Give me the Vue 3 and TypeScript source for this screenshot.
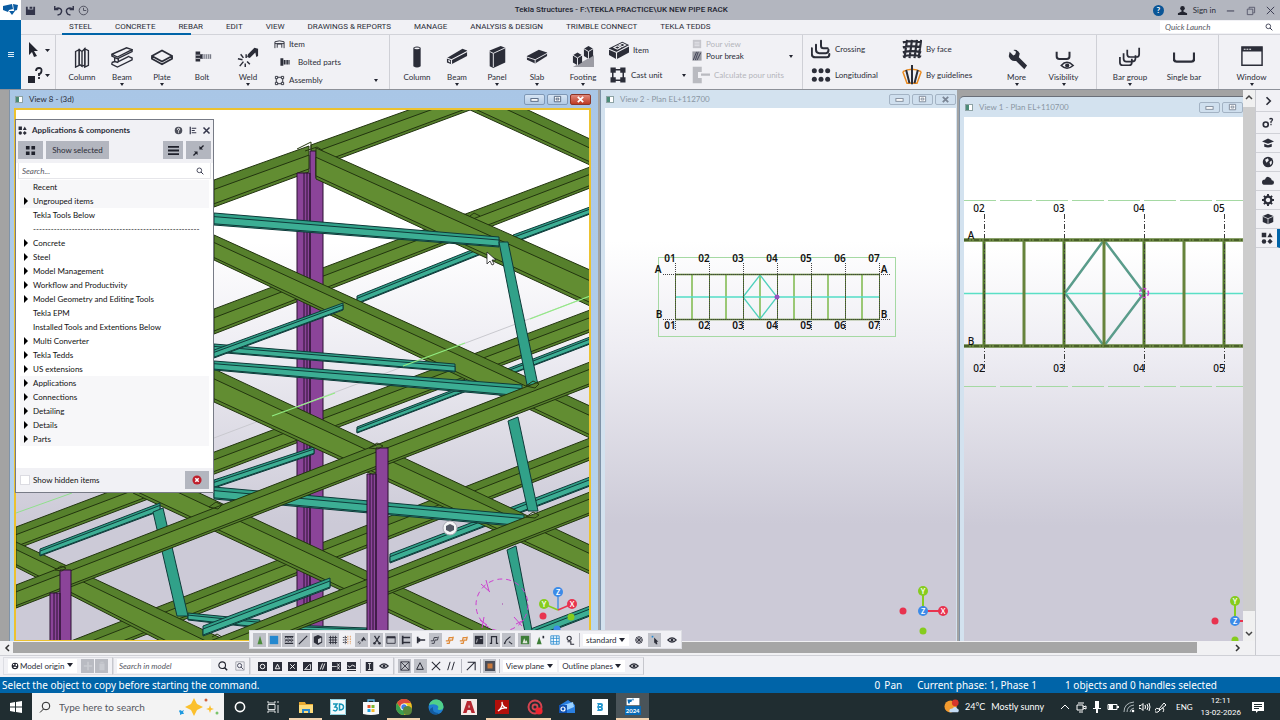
<script setup lang="ts">
import { ref } from 'vue'

interface Tool { name: string; label: string; icon: string; arrow?: boolean }
interface Member { kind: 'green' | 'teal'; a: [number, number, number]; b: [number, number, number] }
interface TreeRow { label: string; open: boolean; shade?: boolean }

const tabs = ['STEEL', 'CONCRETE', 'REBAR', 'EDIT', 'VIEW', 'DRAWINGS & REPORTS', 'MANAGE', 'ANALYSIS & DESIGN', 'TRIMBLE CONNECT', 'TEKLA TEDDS']

/* Ribbon glyphs, drawn on a 24 unit grid */
const glyphs: Record<string, string> = {
  steelColumn: '<g fill="#f1f1f5" stroke="currentColor" stroke-width="1.5"><path d="M5 6l4-2v17l-4 2zM15 3l4 2v16l-4 2z"/><path d="M9 4l3 2v16l-3-2zM12 6l3-3v18l-3 1z"/></g>',
  steelBeam: '<g fill="none" stroke="currentColor" stroke-width="1.5"><path d="M1 9L17 2l6 2L7 12zM1 9v2l6 3 16-8V4M4 13v4M8 14v3l12-6M1 18v2l6 3 16-8v-2l-3-1M1 18l3-1 4 1"/></g>',
  steelPlate: '<g fill="none" stroke="currentColor" stroke-width="1.900"><path d="M1 11l11-6 11 6-11 6zM1 11v3l11 6 11-6v-3"/></g>',
  bolt: '<path fill="currentColor" d="M5 6h5v11H5zM10 9h3v5h-3z"/><path fill="#777a86" d="M12 9h10v5H12z"/><path stroke="#f1f1f5" stroke-width=".8" d="M14 9v5M16 9v5M18 9v5M20 9v5M5 10h5M5 13.500h5"/>',
  weld: '<path fill="currentColor" d="M11 12l1-3 7-7 4 1v8l-2 1-1-5-6 6z"/><path d="M1 14l5 1M3 22l4-5M9 23v-4M14 20l-3-3M4 9l3 4M10 9v4" stroke="currentColor" stroke-width="1.600"/>',
  concColumn: '<path fill="currentColor" d="M8 2q4-3 8 0v20q-4 3-8 0z"/><ellipse cx="12" cy="2.500" rx="3" ry="1" fill="#f1f1f5"/>',
  concBeam: '<path fill="currentColor" d="M1 13L18 3l5 2v6L6 20l-5-2z"/><path fill="none" stroke="#f1f1f5" stroke-width="1.200" d="M1 13l5 2L23 6M6 15v5"/><path fill="#f1f1f5" d="M2.500 15l2 1v2l-2-1z"/>',
  panel: '<path fill="currentColor" d="M4 5l12-5 5 2v16L8 24l-4-2z"/><path fill="none" stroke="#f1f1f5" stroke-width="1" d="M4 6l4 2 13-6M8 8v15"/>',
  slab: '<path fill="currentColor" d="M1 11L14 4l9 3v4L10 19 1 15z"/><path fill="none" stroke="#f1f1f5" stroke-width="1" d="M1 12l9 3 13-7M10 15v4"/>',
  footing: '<path fill="#9c9ca4" d="M1 23h23V10z"/><path fill="currentColor" d="M1 10l5-3 5 3v8l-5 3-5-3zM13 3l5-3 5 3v8l-5 3-5-3z"/><path fill="none" stroke="#f1f1f5" stroke-width="1" d="M1 10l5 3 5-3M6 13v8M13 3l5 3 5-3M18 6v8"/>',
  itemTable: '<path fill="none" stroke="currentColor" stroke-width="2" d="M2 20V6q10-4 20 0v14M7 19V11h10v8M2 10h20"/>',
  boltedParts: '<path fill="currentColor" d="M1 3h7v18H1zM9 7h3v11H9zM13 7h3v11h-3zM17 7h3v11h-3zM21 7h2v11h-2z"/>',
  assembly: '<g fill="none" stroke="currentColor" stroke-width="2"><path d="M3 3h5v5H3zM16 3h5v5h-5zM3 16h5v5H3zM16 16h5v5h-5zM8 5h8M8 19h8M5 8v8M19 8v8"/></g>',
  castItem: '<path fill="currentColor" d="M0 10L16 2l8 4v9L9 23 0 18z"/><path fill="none" stroke="#f1f1f5" stroke-width="1.300" d="M0 11l9 4 15-8M9 15v8M6 9l4-2 4 2-4 2zM12 6l4-2 4 2-4 2z"/>',
  castUnit: '<g fill="currentColor"><path d="M2 2h7v7H2zM15 2h7v7h-7zM2 15h7v7H2zM15 15h7v7h-7z"/></g><path fill="none" stroke="currentColor" stroke-width="2" d="M5 5h14v14H5z"/>',
  pourView: '<path fill="#c6c6cc" d="M2 2h20v20H2z"/><path stroke="#f1f1f5" stroke-width="1.500" d="M6 8h12M6 12h12M6 16h12"/>',
  pourBreak: '<path fill="#9a9ba3" d="M1 1h22v22H1z"/><path fill="none" stroke="#33354a" stroke-width="2" d="M3 22L11 2M12 22l9-18M8 22l7-20"/>',
  pourUnits: '<path fill="#b9bac0" d="M1 1h12v7H8v8h5v7H1zM12 10h12v3H12z"/>',
  crossing: '<g fill="none" stroke="currentColor" stroke-width="2.400" stroke-linecap="round"><path d="M1 11v7q0 4 4 4h14q3 0 3-4M6 7v6q0 4 4 4h8q3 0 3-4M12 2v6q0 3 3 3h5"/></g>',
  longitudinal: '<g fill="currentColor"><circle cx="4" cy="7" r="3"/><circle cx="12" cy="7" r="3"/><circle cx="20" cy="7" r="3"/><circle cx="4" cy="17" r="3"/><circle cx="12" cy="17" r="3"/><circle cx="20" cy="17" r="3"/></g>',
  byFace: '<path fill="none" stroke="currentColor" stroke-width="2.600" d="M6 1L3 23M12 1L9 23M18 1l-3 22M23 1l-3 22M1 4q11-3 22 0M1 10q11-3 22 0M1 16q11-3 22 0M1 21q11-3 22 0"/>',
  guidelines: '<path fill="none" stroke="#eb8a1e" stroke-width="1.800" d="M1 8q11-6 22 0M1 8l5 14h12l5-14"/><path stroke="currentColor" stroke-width="2.400" d="M12 0v23M5 6l4 16M19 6l-4 16"/>',
  wrench: '<path fill="currentColor" d="M4 3l4 4 2-1 1-3-3-2q5-1 7 4l-1 4 9 9-3 4-9-9q-6 1-8-5z"/>',
  visibility: '<path fill="none" stroke="currentColor" stroke-width="2.200" d="M4 3v5q0 3 3 3h8q3 0 3-3V3"/><path fill="none" stroke="currentColor" stroke-width="1.700" d="M9 18q6-7 13 0-7 6-13 0z"/><circle cx="15.500" cy="18" r="2.300" fill="currentColor"/>',
  barGroup: '<g fill="none" stroke="currentColor" stroke-width="1.900"><path d="M1 12v6q0 3 3 3h7q3 0 3-3v-4M5 8v6q0 3 3 3h6q4 0 4-4v-3M9 4v5q0 3 3 3h7q3 0 3-3V2"/></g>',
  singleBar: '<path fill="none" stroke="currentColor" stroke-width="2.600" d="M1 7v7q0 3 3 3h16q3 0 3-3V7"/>',
  windowBox: '<path fill="none" stroke="currentColor" stroke-width="1.600" d="M1 1h22v20H1z"/><path fill="currentColor" d="M1 1h22v5H1z"/><path stroke="#f1f1f5" stroke-width="1.200" d="M3 3.500h2M6 3.500h2M9 3.500h2"/>',
}

const steelTools: Tool[] = [
  { name: 'sc', label: 'Column', icon: 'steelColumn' },
  { name: 'sb', label: 'Beam', icon: 'steelBeam', arrow: true },
  { name: 'sp', label: 'Plate', icon: 'steelPlate', arrow: true },
  { name: 'bo', label: 'Bolt', icon: 'bolt' },
  { name: 'we', label: 'Weld', icon: 'weld', arrow: true },
]
const concreteTools: Tool[] = [
  { name: 'cc', label: 'Column', icon: 'concColumn' },
  { name: 'cb', label: 'Beam', icon: 'concBeam', arrow: true },
  { name: 'cp', label: 'Panel', icon: 'panel', arrow: true },
  { name: 'cs', label: 'Slab', icon: 'slab', arrow: true },
  { name: 'cf', label: 'Footing', icon: 'footing', arrow: true },
]

const tree: TreeRow[] = [
  { label: 'Recent', open: false, shade: true },
  { label: 'Ungrouped items', open: true, shade: true },
  { label: 'Tekla Tools Below', open: false },
  { label: '-'.repeat(56), open: false },
  { label: 'Concrete', open: true },
  { label: 'Steel', open: true },
  { label: 'Model Management', open: true },
  { label: 'Workflow and Productivity', open: true },
  { label: 'Model Geometry and Editing Tools', open: true },
  { label: 'Tekla EPM', open: false },
  { label: 'Installed Tools and Extentions Below', open: false },
  { label: 'Multi Converter', open: true },
  { label: 'Tekla Tedds', open: true },
  { label: 'US extensions', open: true },
  { label: 'Applications', open: true, shade: true },
  { label: 'Connections', open: true, shade: true },
  { label: 'Detailing', open: true, shade: true },
  { label: 'Details', open: true, shade: true },
  { label: 'Parts', open: true, shade: true },
]

/* Model members: [x, top edge, bottom edge] at each end */
const g = (...v: number[]): Member => ({ kind: 'green', a: [v[0], v[1], v[2]], b: [v[3], v[4], v[5]] })
const t = (...v: number[]): Member => ({ kind: 'teal', a: [v[0], v[1], v[2]], b: [v[3], v[4], v[5]] })

const rear: Member[] = [
  g(214, 309, 334, 590, 167, 188),
  g(16, 527, 549, 590, 310, 332),
  g(71, 641, 664, 590, 438, 460),
  g(468, 82, 109, 590, 139, 165),
  g(214, 180, 207, 309, 146, 172),
  g(311, 145, 169, 470, 88, 110),
]
const rearBraces: Member[] = [
  t(513, 235, 243, 590, 207, 214),
  t(357, 296, 304, 499, 239, 247),
  t(357, 427, 433, 590, 337, 344),
  t(214, 480, 488, 314, 447, 454),
  t(390, 554, 563, 590, 477, 486),
  t(188, 613, 620, 260, 620, 628),
  t(262, 624, 628, 367, 628, 633),
]
const middle: Member[] = [
  g(464, 214, 240, 590, 276, 300),
  g(316, 148, 179, 590, 270, 306),
  g(214, 235, 260, 590, 406, 438),
  g(214, 369, 402, 590, 545, 574),
  g(133, 462, 493, 516, 641, 672),
  g(16, 542, 567, 225, 640, 674),
  t(214, 213, 225, 499, 237, 247),
  t(214, 344, 352, 455, 364, 372),
  t(214, 361, 370, 522, 385, 397),
  t(214, 487, 499, 524, 515, 527),
  t(214, 350, 358, 343, 303, 310),
  t(40, 549, 556, 160, 503, 511),
  t(203, 626, 636, 330, 578, 588),
  t(528, 630, 640, 590, 606, 616),
]
const front: Member[] = [
  g(16, 585, 608, 590, 362, 386),
  g(200, 645, 668, 590, 492, 515),
]
const struts = ['153,512 163,508 188,616 177,616', '499,242 508,242 538,385 527,385', '508,421 518,417 538,511 528,511', '507,550 516,546 534,641 527,641']

const outline = (m: Member) => `${m.a[0]},${m.a[1]} ${m.b[0]},${m.b[1]} ${m.b[0]},${m.b[2]} ${m.a[0]},${m.a[2]}`
const strip = (m: Member, from: number, to: number) => {
  const at = (e: [number, number, number], f: number) => e[1] + (e[2] - e[1]) * f
  return `${m.a[0]},${at(m.a, from)} ${m.b[0]},${at(m.b, from)} ${m.b[0]},${at(m.b, to)} ${m.a[0]},${at(m.a, to)}`
}

const smallPlan = {
  axes: [675, 709, 743, 777, 811, 845, 879].map((x, i) => ({ x, label: `0${i + 1}` })),
  mids: [692, 726, 760, 794, 828, 862],
}
const largePlan = {
  axes: [984, 1064, 1144, 1224].map((x, i) => ({ x, label: `0${i + 2}` })),
  mids: [1024, 1104, 1184],
}

/* Small toolbar glyphs on a 12 unit grid */
const mini: Record<string, string> = {
  cone: '<path fill="#4b8b3b" d="M6 1l3 10H3z"/>',
  part: '<path fill="#2488cf" d="M1 1h10v10H1z"/>',
  grate: '<path stroke="currentColor" stroke-width="1.400" d="M1 2h10M1 6h10M1 10h10"/><path stroke="currentColor" d="M1 4l2-2 2 2 2-2 2 2 2-2M1 8l2-2 2 2 2-2 2 2 2-2" fill="none"/>',
  line: '<path stroke="currentColor" stroke-width="1.300" d="M1 11L11 1"/>',
  cube: '<path fill="currentColor" d="M6 0l5 2v7l-5 3-5-3V2z"/><path fill="#d5d7dd" d="M6 5l4-2v5l-4 2z"/>',
  grid: '<path stroke="currentColor" d="M1 3h10M1 6h10M1 9h10M3 1v10M6 1v10M9 1v10"/>',
  gridDots: '<path stroke="#e0904a" stroke-dasharray="2 1" d="M7 1v10M10 1v10"/><path stroke="currentColor" stroke-dasharray="2 1" d="M1 3h6M1 6h6M1 9h6M4 1v10"/>',
  weldSmall: '<path fill="currentColor" d="M5 6l3-4 3 5-3-1-2 2z"/><path stroke="currentColor" d="M1 9l2-1M3 11l1-2"/>',
  cut: '<path fill="none" stroke="currentColor" stroke-width="1.500" d="M3 1l5 8M9 1L4 9"/><circle cx="3" cy="10" r="1.500" fill="currentColor"/><circle cx="9" cy="10" r="1.500" fill="currentColor"/>',
  frame: '<path fill="none" stroke="currentColor" d="M1 2h10v8H1z"/><path stroke="currentColor" stroke-width="2" d="M1 3h10"/>',
  clamp: '<path fill="none" stroke="currentColor" stroke-width="2" d="M2 1v10M2 3h9M2 9h9"/>',
  boltSmall: '<path fill="currentColor" d="M1 2h2v8H1zM3 4h2v4H3zM5 5h6v2H5z"/>',
  rebar: '<path fill="none" stroke="currentColor" d="M2 10h3l1-4h3l1-4M1 7h3l1-4h4"/>',
  rebarOrange: '<path fill="none" stroke="#df8b3a" stroke-width="1.500" d="M2 10h3l1-4h3l1-4M1 7h3l1-4h4"/>',
  solid: '<path fill="currentColor" d="M1 1h10v10H1z"/><path stroke="#d5d7dd" d="M3 9l1-4M7 4h3"/>',
  gate: '<path fill="none" stroke="currentColor" stroke-width="1.500" d="M1 10h2V2h6v8h2"/>',
  leader: '<path fill="none" stroke="currentColor" stroke-width="1.300" d="M2 10l2-4 5-4M7 8l4 3"/><circle cx="2" cy="10" r="1" fill="currentColor"/>',
  terrain: '<path fill="#3e7d38" d="M1 1h10v10H1z"/><path fill="#dfe8dc" d="M3 10l2-6 2 4 1-2 1 4z"/>',
  coneStar: '<path fill="#3e7d38" d="M5 2l3 9H2z"/><path fill="currentColor" d="M9 1h2v3H9z"/>',
  blueGrid: '<path fill="#fff" stroke="#2488cf" d="M1 1h10v10H1zM4 1v10M8 1v10M1 4h10M1 8h10"/>',
  probe: '<circle cx="5" cy="4" r="2.500" fill="none" stroke="currentColor" stroke-width="1.300"/><path fill="none" stroke="currentColor" stroke-width="1.300" d="M3 8h4v3h4"/>',
  sphere: '<circle cx="6" cy="6" r="4" fill="none" stroke="currentColor"/><path stroke="currentColor" d="M3 3l6 6M9 3L3 9M2 6h8M6 2v8"/>',
  pick: '<path fill="#2488cf" d="M2 1h2v2H2z"/><path fill="currentColor" d="M5 3l5 5H8l1 3-2 0-1-2-1 1z"/>',
  eye: '<path fill="none" stroke="currentColor" stroke-width="1.300" d="M1 6q5-5 10 0-5 5-10 0z"/><circle cx="6" cy="6" r="1.800" fill="currentColor"/>',
  k1: '<path fill="currentColor" d="M0 0h12v12H0z"/><circle cx="6" cy="6" r="3" fill="none" stroke="#fff" stroke-width="1.300"/>',
  k2: '<path fill="currentColor" d="M0 0h12v12H0z"/><path fill="none" stroke="#fff" stroke-width="1.200" d="M6 3l3 6H3z"/>',
  k3: '<path fill="currentColor" d="M0 0h12v12H0z"/><path stroke="#fff" stroke-width="1.300" d="M3 3l6 6M9 3L3 9"/>',
  k4: '<path fill="currentColor" d="M0 0h12v12H0z"/><path fill="none" stroke="#fff" d="M2 10h8V3M5 9V7M2 10l7-7"/>',
  k5: '<path fill="currentColor" d="M0 0h12v12H0z"/><path stroke="#fff" stroke-width="1.200" d="M3 10l3-8M6 10l3-8"/>',
  k6: '<path fill="currentColor" d="M0 0h12v12H0z"/><path fill="none" stroke="#fff" d="M0 6h6M7 2l3 4-3 4M10 2L7 6l3 4"/>',
  k7: '<path fill="currentColor" d="M0 0h12v12H0z"/><path fill="none" stroke="#fff" stroke-width="1.200" d="M1 5l3 2 3-3 4 2M0 10h12"/>',
  k8: '<path fill="currentColor" d="M1 0h10v12H1z"/><path fill="none" stroke="#fff" d="M4 2h4M4 10h4M6 2v8"/>',
  boxX: '<path fill="none" stroke="currentColor" d="M1 1h10v10H1zM1 1l10 10M11 1L1 11"/>',
  tri: '<path fill="none" stroke="currentColor" stroke-width="1.200" d="M6 2l4 8H2z"/>',
  cross: '<path stroke="currentColor" stroke-width="1.300" d="M1 1l10 10M11 1L1 11"/>',
  slashes: '<path stroke="currentColor" stroke-width="1.200" d="M2 11l3-10M7 11l3-10"/>',
  arrowUp: '<path fill="none" stroke="currentColor" stroke-width="1.300" d="M1 11L10 2M2 1.500h9V11"/>',
  target: '<path fill="#4a4d59" d="M0 0h12v12H0z"/><path fill="#c8783c" d="M3 3h6v6H3z"/>',
}
const selectors = ['cone', 'part', 'grate', 'line', 'cube', 'grid', 'gridDots', 'weldSmall', 'cut', 'frame', 'clamp', 'boltSmall', 'rebar', 'rebarOrange', 'rebarOrange', 'solid', 'gate', 'leader']
const plainSelectors = [6, 11, 13, 14]
const selectors2 = ['terrain', 'coneStar', 'blueGrid', 'probe']
const snaps = ['k1', 'k2', 'k3', 'k4', 'k5', 'k6', 'k7']

/* Side pane glyphs on a 16 unit grid */
const side: { name: string; art: string }[] = [
  { name: 'Expand', art: '<path fill="none" stroke="currentColor" stroke-width="2.200" d="M6 3l5 5-5 5"/>' },
  { name: 'Help', art: '<circle cx="5" cy="10" r="3.300" fill="none" stroke="currentColor" stroke-width="2.200"/><path fill="none" stroke="currentColor" stroke-width="1.600" d="M10 3q2-2 4 0 0 2-2 3v2M12 9v2"/>' },
  { name: 'Learn', art: '<path fill="currentColor" d="M0 6l8-4 8 4-8 3zM3 9l5 2 5-2v4q-5 2-10 0z"/>' },
  { name: 'Online', art: '<circle cx="8" cy="8" r="7" fill="currentColor"/><path fill="#f1f1f5" d="M4 5l4-2 1 3-3 3zM10 8l3-2 0 4-2 2z"/>' },
  { name: 'Cloud', art: '<path fill="currentColor" d="M4 13q-4 0-4-3.500T4 6q1-4 4.500-3.500T13 7q3 0 3 3t-3 3z"/>' },
  { name: 'Settings', art: '<circle cx="8" cy="8" r="4.500" fill="none" stroke="currentColor" stroke-width="3"/><path stroke="currentColor" stroke-width="2.500" d="M8 0v3M8 13v3M0 8h3M13 8h3M2.500 2.500l2 2M11.500 11.500l2 2M13.500 2.500l-2 2M2.500 13.500l2-2"/>' },
  { name: 'Model', art: '<path fill="currentColor" d="M8 1l7 3v8l-7 3-7-3V4z"/><path fill="none" stroke="#f1f1f5" d="M1 4.500l7 3 7-3M8 7.500V15"/>' },
  { name: 'Components', art: '<path fill="currentColor" d="M1 1h6v6H1zM12 1l3.500 6h-7zM12 9l3.500 3.500L12 16l-3.500-3.500z"/><circle cx="4" cy="12.500" r="3" fill="currentColor"/>' },
]

const taskApps: { name: string; art: string; live?: boolean }[] = [
  { name: 'Cortana', art: '<circle cx="8" cy="8" r="4.600" fill="none" stroke="#fff" stroke-width="1.600"/>' },
  { name: 'Task view', art: '<path fill="none" stroke="#dfe3e4" d="M3 5.500h7v5H3zM3 2v2h7V2M3 14v-2h7v2M13 2v2M13 6v8"/>' },
  { name: 'Explorer', art: '<path fill="#e9a932" d="M1 3h6l1 2h7v9H1z"/><path fill="#ffdc7c" d="M1 6h14v8H1z"/><path fill="#2f87c8" d="M4 10h8v4h-2v-2H6v2H4z"/>', live: true },
  { name: '3D Viewer', art: '<path fill="#f3fbfd" d="M0 0h16v16H0z"/><path fill="none" stroke="#8fd0df" d="M.5.500h15v15H.500z"/><path fill="none" stroke="#1596b8" stroke-width="1.500" d="M3 5h4L5 8q3 0 2 2.500T3 11M9.500 5v6q4 0 4-3t-4-3z"/>' },
  { name: 'Store', art: '<path fill="none" stroke="#51b5ea" stroke-width="1.300" d="M5 4V1h6v3"/><path fill="#f7f9fa" d="M0 3h16v12q-8 2-16 0z"/><path fill="#e9522c" d="M4.500 6h3v3h-3z"/><path fill="#7cb82f" d="M8.500 6h3v3h-3z"/><path fill="#1ba1e2" d="M4.500 10h3v3h-3z"/><path fill="#f9b926" d="M8.500 10h3v3h-3z"/>' },
  { name: 'Chrome', art: '<circle cx="8" cy="8" r="8" fill="#f0c022"/><path fill="#dd4a3c" d="M1 4a8 8 0 0 1 14 0H8L5 9z"/><path fill="#3b9e50" d="M1 4a8 8 0 0 0 7 12l3-6-6 0z"/><circle cx="8" cy="8" r="3.600" fill="#fff"/><circle cx="8" cy="8" r="2.700" fill="#3f7fe6"/><circle cx="11.500" cy="11.500" r="4.500" fill="#58873b"/>', live: true },
  { name: 'Edge', art: '<circle cx="8" cy="8" r="7.500" fill="#1f7fd0"/><path fill="#4fd08a" d="M1 6q2-6 8-5.500T15.500 8q0 3-4 3-3 0-1-3-2-4-9.500-2z"/><path fill="#135a9f" d="M5 8q-1 6 6 6-4 3-8 0T5 8z"/>' },
  { name: 'AutoCAD', art: '<path fill="#f5e9e7" d="M0 0h16v16H0z"/><path fill="#b62630" d="M6 2h4l4 12h-3.500l-1-3h-3l-1 3H2zM7.300 8.500h1.600L8 5.500z"/>' },
  { name: 'Acrobat', art: '<path fill="#b20f0a" d="M1 1h14v14H1z"/><path fill="none" stroke="#fff" stroke-width="1.300" d="M4 12q5-4 4-9 0 5 5 6-5-1-9 3z"/>', live: true },
  { name: 'Recorder', art: '<circle cx="8" cy="8" r="6.500" fill="none" stroke="#d54450" stroke-width="2"/><circle cx="8" cy="8" r="2.500" fill="none" stroke="#d54450" stroke-width="1.800"/><circle cx="12" cy="12" r="3.600" fill="#ee2530"/>', live: true },
  { name: 'Outlook', art: '<path fill="#2a7fe0" d="M1 6l8-5 7 5v8H1z"/><path fill="#9bd2ff" d="M5 6l9-3 1 5-7 3z"/><path fill="#1152b2" d="M0 6h8v8H0z"/><circle cx="4" cy="10" r="2" fill="none" stroke="#fff" stroke-width="1.200"/>' },
  { name: 'Bluebeam', art: '<path fill="#fff" d="M0 0h16v16H0z"/><path fill="#2496cd" d="M5 4h4q2 0 2 2t-1 2q1 0 1 2t-2 2H5l1-2-1-2 1-2z"/><path fill="#fff" d="M7 6h2v1H7zM7 9h2v1H7z"/>' },
]

const hidden = ref(false)
const origin = ref('Model origin')
const plane = ref('View plane')
const outlinePlane = ref('Outline planes')
const selection = ref('standard')
</script>

<template>
  <div class="app">
    <header class="titlebar">
      <svg class="brand" viewBox="0 0 21 20"><path fill="#fff" d="M0 0h21v20H0z" /><path fill="#0a5ba1" d="M3 6l9-2 1 5-4 1-1 2-5-2zM13 4l5 1-1 5-3 1zM9 11l6 0-3 4z" /></svg>
      <div class="quick">
        <button aria-label="Save"><svg viewBox="0 0 12 12"><path fill="#33354a" d="M1 2h2v3h6V2h2v9H1zM5 2h3v2H5z" /></svg></button>
        <button aria-label="Undo" class="after"><svg viewBox="0 0 12 12"><path fill="none" stroke="#33354a" stroke-width="1.600" d="M3 1v4h4M3 5q3-3 6-1t0 6l-3 1" /></svg></button>
        <button aria-label="Redo"><svg viewBox="0 0 12 12"><path fill="none" stroke="#33354a" stroke-width="1.600" d="M9 1v4H5M9 5Q6 2 3 4t0 6l3 1" /></svg></button>
        <button aria-label="History"><svg viewBox="0 0 12 12"><circle cx="6" cy="6" r="4.700" fill="none" stroke="#4a4c5a" /><path fill="none" stroke="#4a4c5a" d="M6 3v3h3" /></svg></button>
      </div>
      <h1>Tekla Structures - F:\TEKLA PRACTICE\UK NEW PIPE RACK</h1>
      <div class="account">
        <button class="help" aria-label="Help">?</button>
        <button class="signin"><svg viewBox="0 0 12 12"><circle cx="6" cy="3.500" r="2.500" fill="#22242f" /><path fill="#22242f" d="M5 5h2v2l4 2v2H1V9l4-2z" /></svg>Sign in</button>
        <button aria-label="Minimize"><svg viewBox="0 0 12 12"><path stroke="#33354a" d="M2 6.500h8" /></svg></button>
        <button aria-label="Restore"><svg viewBox="0 0 12 12"><path fill="none" stroke="#55576a" d="M2.500 4.500h6v6h-6zM4.500 4V2.500h6v6H9" /></svg></button>
        <button aria-label="Close"><svg viewBox="0 0 12 12"><path stroke="#33354a" d="M2 2l8 8M10 2l-8 8" /></svg></button>
      </div>
    </header>

    <div class="command">
      <button class="menu" aria-label="File menu"><svg viewBox="0 0 8 8"><path stroke="#dcebf6" d="M1 1.500h6M1 3.500h6M1 5.500h6" /></svg></button>
      <div class="ribbon-wrap">
        <nav class="tabs">
          <button v-for="tab in tabs" :key="tab">{{ tab }}</button>
          <label class="launch"><input type="text" placeholder="Quick Launch" aria-label="Quick Launch" /><svg viewBox="0 0 12 12"><circle cx="5" cy="5" r="3.500" fill="none" stroke="#33354a" stroke-width="1.300" /><path stroke="#33354a" stroke-width="1.500" d="M7.500 7.500L11 11" /></svg></label>
        </nav>
        <div class="ribbon">
          <section class="group g0">
            <button aria-label="Select"><svg viewBox="0 0 24 16"><path fill="#22242f" d="M3 0l9 9H8l3 5-3 1-2-5-3 3z" /><path fill="#22242f" d="M19 7h5l-2.500 3z" /></svg></button>
            <button aria-label="Inquire"><svg viewBox="0 0 24 16"><path fill="#22242f" d="M2 9h7v7H2zM19 7h5l-2.500 3z" /><path fill="none" stroke="#22242f" stroke-width="1.800" d="M10 4q0-3 3-3t2.500 3-2.500 3v2M13 10v2" /></svg></button>
          </section>
          <section class="group g1">
            <button v-for="b in steelTools" :key="b.name" class="big">
              <svg viewBox="0 0 24 24" v-html="glyphs[b.icon]" /><span>{{ b.label }}</span><i v-if="b.arrow" class="tick" />
            </button>
            <div class="stack three">
              <button><svg class="s12" viewBox="0 0 24 24" v-html="glyphs.itemTable" />Item</button>
              <button class="inset"><svg class="s14" viewBox="0 0 24 24" v-html="glyphs.boltedParts" />Bolted parts</button>
              <button class="wide"><svg class="s12" viewBox="0 0 24 24" v-html="glyphs.assembly" />Assembly<i class="tick" /></button>
            </div>
          </section>
          <section class="group g2">
            <button v-for="b in concreteTools" :key="b.name" class="big">
              <svg viewBox="0 0 24 24" v-html="glyphs[b.icon]" /><span>{{ b.label }}</span><i v-if="b.arrow" class="tick" />
            </button>
            <div class="stack cast">
              <button><svg class="s22" viewBox="0 0 24 24" v-html="glyphs.castItem" />Item</button>
              <button class="wide"><svg class="s18" viewBox="0 0 24 24" v-html="glyphs.castUnit" />Cast unit<i class="tick" /></button>
            </div>
            <div class="stack pour">
              <button class="off"><svg class="s10" viewBox="0 0 24 24" v-html="glyphs.pourView" />Pour view</button>
              <button class="wide"><svg class="s10" viewBox="0 0 24 24" v-html="glyphs.pourBreak" />Pour break<i class="tick" /></button>
              <button class="off low"><svg class="s18" viewBox="0 0 24 24" v-html="glyphs.pourUnits" />Calculate pour units</button>
            </div>
          </section>
          <section class="group g3">
            <div class="stack two">
              <button><svg class="s22" viewBox="0 0 24 24" v-html="glyphs.crossing" />Crossing</button>
              <button><svg class="s22" viewBox="0 0 24 24" v-html="glyphs.longitudinal" />Longitudinal</button>
            </div>
            <div class="stack two">
              <button><svg class="s22" viewBox="0 0 24 24" v-html="glyphs.byFace" />By face</button>
              <button><svg class="s22" viewBox="0 0 24 24" v-html="glyphs.guidelines" />By guidelines</button>
            </div>
            <button class="big"><svg class="lower" viewBox="0 0 24 24" v-html="glyphs.wrench" /><span>More</span><i class="tick" /></button>
            <button class="big"><svg class="lower" viewBox="0 0 24 24" v-html="glyphs.visibility" /><span>Visibility</span><i class="tick" /></button>
          </section>
          <section class="group g4">
            <button class="big"><svg viewBox="0 0 24 24" v-html="glyphs.barGroup" /><span>Bar group</span><i class="tick" /></button>
            <button class="big"><svg viewBox="0 0 24 24" v-html="glyphs.singleBar" /><span>Single bar</span></button>
          </section>
          <section class="group g5">
            <button class="big"><svg viewBox="0 0 24 24" v-html="glyphs.windowBox" /><span>Window</span><i class="tick" /></button>
          </section>
        </div>
      </div>
    </div>

    <main class="work">
      <div class="desktop">
        <div class="windows">
          <section class="win active">
            <div class="caption"><i class="app-mark" /><span>View 8 - (3d)</span>
              <button aria-label="Minimize view"><svg viewBox="0 0 20 10"><rect x="6" y="4" width="8" height="3" fill="#fff" stroke="#4c5f7a" /></svg></button>
              <button aria-label="Restore view"><svg viewBox="0 0 20 10"><path fill="#fff" stroke="#4c5f7a" d="M6.500 1.500h7v6h-7zM8.500 3.500h3v2h-3z" /></svg></button>
              <button class="red" aria-label="Close view"><svg viewBox="0 0 20 10"><path stroke="#fff" stroke-width="2" d="M7 2l6 6M13 2L7 8" /></svg></button>
            </div>
            <div class="canvas gold">
              <svg viewBox="16 110 573 531" preserveAspectRatio="xMinYMin slice">
                <path d="M16 513L72 493" stroke="#90e08c" />
                <g v-for="(m, i) in rear" :key="'r' + i" :class="m.kind">
                  <polygon :points="outline(m)" /><polygon class="mid" :points="strip(m, 0.35, 0.88)" />
                </g>
                <g class="violet">
                  <path d="M297 173h13v468h-13zM310 151h13v490h-13z" /><path class="edge" d="M304 173v468M307 173v468M316 151v27" />
                </g>
                <g v-for="(m, i) in rearBraces" :key="'b' + i" :class="m.kind">
                  <polygon :points="outline(m)" /><polygon class="mid" :points="strip(m, 0.3, 0.9)" />
                </g>
                <path d="M214 438L590 296" stroke="#c9c9cf" />
                <g v-for="(m, i) in middle" :key="'m' + i" :class="m.kind">
                  <polygon :points="outline(m)" /><polygon class="mid" :points="strip(m, 0.3, 0.9)" />
                </g>
                <path d="M272 416L335 393M403 366L465 343M530 319L590 296" stroke="#92ed83" stroke-width="1.300" />
                <g class="teal"><polygon v-for="s in struts.slice(0, 3)" :key="s" :points="s" /></g>
                <g v-for="(m, i) in front" :key="'f' + i" :class="m.kind">
                  <polygon :points="outline(m)" /><polygon class="mid" :points="strip(m, 0.3, 0.9)" />
                </g>
                <g class="teal"><polygon :points="struts[3]" /></g>
                <g class="violet">
                  <path d="M367 474h9v167h-9zM376 448h12v193h-12zM50 593h10v48H50zM60 570h11v71H60z" />
                  <path class="edge" d="M370 474v167M373 474v167M54 593v48M57 593v48" />
                </g>
                <g fill="none" stroke="#26380f"><path d="M297 149l14-7v8M305 151l12-4 5 3M369 448l8-5 6 3-5 3zM526 386l7-5 6 3-4 4zM526 517l7-5 6 3-4 3zM209 507l7-5 6 3-4 4zM55 570l6-4 5 2-4 3zM470 216l4-3 6 3M212 637l5-3 5 3" /></g>
                <g fill="none" stroke="#cd3fd0"><circle cx="502" cy="605" r="26" stroke-dasharray="5 4" /><path d="M481 584l9 8M486 580l3 11M480 620l7 5M484 617l-2 11M514 617l8 9M524 620l-8 4" /></g>
                <path d="M502 604h1" stroke="#a33aa8" />
                <g class="axis">
                  <path d="M558 610V592" stroke="#4a90e2" stroke-width="1.500" /><path d="M558 610l-14-6" stroke="#86cc1e" stroke-width="1.500" /><path d="M558 610l14-6" stroke="#e8334f" stroke-width="1.500" />
                  <circle cx="558" cy="592" r="5" fill="#3b8be8" /><circle cx="544" cy="604" r="5" fill="#86cc1e" /><circle cx="572" cy="604" r="5" fill="#e8334f" />
                  <circle cx="543" cy="616" r="3.500" fill="#e8334f" /><circle cx="571" cy="617" r="3.500" fill="#86cc1e" /><circle cx="557" cy="629" r="3.500" fill="#3b8be8" />
                  <text x="558" y="595">Z</text><text x="544" y="607">Y</text><text x="572" y="607">X</text>
                </g>
                <circle cx="450" cy="528" r="7" fill="#f5f5f7" stroke="#a9a9b3" /><path fill="#555866" d="M450 524l4 2v4l-4 2-4-2v-4z" />
                <path fill="#fff" stroke="#222" stroke-width=".8" d="M487 252v12l3-3 2 4 2-1-2-4h4z" />
              </svg>
            </div>
          </section>

          <section class="win plan2">
            <div class="caption"><i class="app-mark" /><span>View 2 - Plan EL+112700</span>
              <button aria-label="Minimize view"><svg viewBox="0 0 20 10"><rect x="6" y="4" width="8" height="3" fill="#fff" stroke="#7b8696" /></svg></button>
              <button aria-label="Restore view"><svg viewBox="0 0 20 10"><path fill="#fff" stroke="#7b8696" d="M6.500 1.500h7v6h-7zM8.500 3.500h3v2h-3z" /></svg></button>
              <button aria-label="Close view"><svg viewBox="0 0 20 10"><path stroke="#7b8696" stroke-width="2" d="M7 2l6 6M13 2L7 8" /></svg></button>
            </div>
            <div class="canvas">
              <svg viewBox="605 108 351 533" preserveAspectRatio="xMinYMin slice">
                <rect x="658.500" y="257.500" width="237" height="79" fill="none" stroke="#a5d9a3" />
                <path v-for="x in smallPlan.mids" :key="x" :d="`M${x} 275V319`" stroke="#7db84a" stroke-width="1.500" />
                <path d="M675 297H879" stroke="#52dcc6" stroke-width="1.400" /><path d="M743 297L760 275L777 297L760 319Z" fill="none" stroke="#4fd0bc" stroke-width="1.300" />
                <path d="M675 274.500H879M675 319.500H879" stroke="#587f2a" stroke-width="1.500" />
                <g v-for="a in smallPlan.axes" :key="a.x">
                  <path :d="`M${a.x}.5 275V319`" stroke="#587f2a" /><path class="grid" :d="`M${a.x}.5 263V330`" />
                  <text class="tag" :x="a.x - 5" y="262">{{ a.label }}</text><text class="tag" :x="a.x - 5" y="329">{{ a.label }}</text>
                </g>
                <path class="grid" d="M663 274.500H890M663 319.500H890" />
                <text class="tag" x="658" y="273">A</text><text class="tag" x="884" y="273">A</text><text class="tag" x="659" y="318">B</text><text class="tag" x="884" y="318">B</text>
                <circle cx="777" cy="297" r="2" fill="#8d5bc4" stroke="#a23cc0" />
                <g class="axis">
                  <path d="M923 611V591" stroke="#86cc1e" stroke-width="2" /><path d="M923 611H943" stroke="#e8334f" stroke-width="2" />
                  <circle cx="923" cy="591" r="5" fill="#86cc1e" /><circle cx="943" cy="611" r="5" fill="#e8334f" /><circle cx="923" cy="611" r="5" fill="#3b8be8" /><circle cx="903" cy="611" r="3.500" fill="#e8334f" /><circle cx="923" cy="631" r="3.500" fill="#86cc1e" />
                  <text x="923" y="594">Y</text><text x="923" y="614">Z</text><text x="943" y="614">X</text>
                </g>
              </svg>
            </div>
          </section>

          <section class="win plan1">
            <div class="caption"><i class="app-mark" /><span>View 1 - Plan EL+110700</span>
              <button aria-label="Minimize view"><svg viewBox="0 0 20 10"><rect x="6" y="4" width="8" height="3" fill="#fff" stroke="#7b8696" /></svg></button>
              <button aria-label="Restore view"><svg viewBox="0 0 20 10"><path fill="#fff" stroke="#7b8696" d="M6.500 1.500h7v6h-7zM8.500 3.500h3v2h-3z" /></svg></button>
            </div>
            <div class="canvas">
              <svg viewBox="964 117 279 524" preserveAspectRatio="xMinYMin slice">
                <path d="M964 200.500H1243M964 386.500H1243" stroke="#a5d9a3" stroke-dasharray="32 4" />
                <path d="M1065 293L1104 240L1144 293L1104 346Z" fill="none" stroke="#5a9c8b" stroke-width="2.500" />
                <path d="M964 293.500H1243" stroke="#5adfc6" stroke-width="1.300" />
                <path v-for="x in largePlan.mids" :key="x" :d="`M${x} 240V346`" stroke="#66833c" stroke-width="3" />
                <g v-for="a in largePlan.axes" :key="a.x">
                  <path :d="`M${a.x} 240V346`" stroke="#557a2c" stroke-width="3" /><path :d="`M${a.x}.5 214V374`" stroke="#3a3a3a" stroke-dasharray="5 2 1 2" />
                  <text class="tag thin" :x="a.x - 5" y="212">{{ a.label }}</text><text class="tag thin" :x="a.x - 5" y="372">{{ a.label }}</text>
                </g>
                <path d="M964 240H1243M964 346H1243" stroke="#66833c" stroke-width="3.500" /><path d="M964 240H1243M964 346H1243" stroke="#2c3d16" stroke-dasharray="5 2 1 2" />
                <text class="tag thin" x="971" y="239">A</text><text class="tag thin" x="971" y="345">B</text>
                <circle cx="1144" cy="293" r="4.500" fill="none" stroke="#cd3fd0" stroke-width="1.500" stroke-dasharray="3 2" />
                <g class="axis">
                  <path d="M1235 621V601" stroke="#86cc1e" stroke-width="2" /><path d="M1235 621H1255" stroke="#e8334f" stroke-width="2" />
                  <circle cx="1235" cy="601" r="5" fill="#86cc1e" /><circle cx="1235" cy="621" r="5" fill="#3b8be8" /><circle cx="1215" cy="621" r="3.500" fill="#e8334f" /><circle cx="1235" cy="640" r="3.500" fill="#86cc1e" />
                  <text x="1235" y="604">Y</text><text x="1235" y="624">Z</text>
                </g>
              </svg>
            </div>
          </section>
          <div class="vbar"><button aria-label="Scroll up"><svg viewBox="0 0 8 8"><path fill="none" stroke="#444" stroke-width="1.500" d="M1 6l3-3 3 3" /></svg></button><i /><button aria-label="Scroll down"><svg viewBox="0 0 8 8"><path fill="none" stroke="#444" stroke-width="1.500" d="M1 2l3 3 3-3" /></svg></button></div>
        </div>
        <div class="hbar"><button aria-label="Scroll left"><svg viewBox="0 0 8 8"><path fill="none" stroke="#333" stroke-width="1.500" d="M6 1L3 4l3 3" /></svg></button><i /><button aria-label="Scroll right"><svg viewBox="0 0 8 8"><path fill="none" stroke="#333" stroke-width="1.500" d="M2 1l3 3-3 3" /></svg></button></div>
      </div>

      <aside class="sidebar">
        <button v-for="s in side" :key="s.name" :aria-label="s.name"><svg viewBox="0 0 16 16" v-html="s.art" /></button>
      </aside>

      <section class="panel">
        <header>
          <svg viewBox="0 0 16 16" v-html="side[7].art" /><h2>Applications &amp; components</h2>
          <button aria-label="Panel help"><svg viewBox="0 0 12 12"><circle cx="6" cy="6" r="5" fill="#4c4e5a" /><path fill="none" stroke="#fff" stroke-width="1.300" d="M4.500 5q0-2 1.500-2t1.500 1.500L6 6.500v1M6 8.500v1" /></svg></button>
          <button aria-label="Panel options"><svg viewBox="0 0 12 12"><path stroke="#33354a" stroke-width="1.600" d="M3 1v10M5 3h6M5 6h4M5 9h6" /></svg></button>
          <button aria-label="Close panel"><svg viewBox="0 0 12 12"><path stroke="#33354a" stroke-width="2" d="M2 2l8 8M10 2l-8 8" /></svg></button>
        </header>
        <div class="modes">
          <button aria-label="Thumbnails" class="w26"><svg viewBox="0 0 12 12"><path fill="#1f212b" d="M1 1h4v4H1zM7 1h4v4H7zM1 7h4v4H1zM7 7h4v4H7z" /></svg></button>
          <button class="show">Show selected</button>
          <button aria-label="List" class="w20"><svg viewBox="0 0 12 12"><path stroke="#1f212b" stroke-width="2" d="M0 2h12M0 6h12M0 10h12" /></svg></button>
          <button aria-label="Collapse" class="w26"><svg viewBox="0 0 12 12"><path fill="#1f212b" d="M7 5V1l1.500 1.500L11 0l1 1-2.500 2.500L11 5zM5 7v4L3.500 9.500 1 12l-1-1 2.500-2.500L1 7z" /></svg></button>
        </div>
        <label class="find"><input type="text" placeholder="Search..." aria-label="Search components" /><svg viewBox="0 0 12 12"><circle cx="5" cy="5" r="3.500" fill="none" stroke="#33354a" stroke-width="1.300" /><path stroke="#33354a" stroke-width="1.500" d="M7.500 7.500L11 11" /></svg></label>
        <ul>
          <li v-for="(row, i) in tree" :key="i" :class="{ shade: row.shade }"><i :class="{ caret: row.open }" /><span>{{ row.label }}</span></li>
        </ul>
        <footer>
          <label><input v-model="hidden" type="checkbox" />Show hidden items</label>
          <button aria-label="Clear"><svg viewBox="0 0 12 12"><circle cx="6" cy="6" r="5.500" fill="#c01f2b" /><path stroke="#fff" stroke-width="1.800" d="M4 4l4 4M8 4L4 8" /></svg></button>
        </footer>
      </section>

      <div class="floatbar">
        <div class="run18"><button v-for="(s, i) in selectors" :key="i" :class="{ plain: plainSelectors.includes(i) }" :aria-label="s"><svg viewBox="0 0 12 12" v-html="mini[s]" /></button></div>
        <div class="run4"><button v-for="(s, i) in selectors2" :key="s" :class="{ plain: i > 0 }" :aria-label="s"><svg viewBox="0 0 12 12" v-html="mini[s]" /></button></div>
        <i class="bar" />
        <label class="drop"><select v-model="selection" aria-label="Selection filter"><option>standard</option></select></label>
        <button class="plain globe" aria-label="Filter"><svg viewBox="0 0 12 12" v-html="mini.sphere" /></button>
        <div class="run2"><button aria-label="Pick"><svg viewBox="0 0 12 12" v-html="mini.pick" /></button><button class="plain" aria-label="Show"><svg viewBox="0 0 12 12" v-html="mini.eye" /></button></div>
      </div>
    </main>

    <div class="toolrow">
      <div class="set s-origin">
        <label class="drop"><svg viewBox="0 0 12 12"><circle cx="6" cy="6" r="5" fill="#22242f" /><path fill="#fff" d="M3 3l2 0v2H3zM7 3h2v3H7zM4 7h4v2H4z" /></svg><select v-model="origin" aria-label="Origin"><option>Model origin</option></select></label>
        <button class="grey" disabled aria-label="Add"><svg viewBox="0 0 12 12"><path stroke="#c9cbd1" stroke-width="2" d="M6 1v10M1 6h10" /></svg></button>
        <button class="grey" disabled aria-label="Delete"><svg viewBox="0 0 12 12"><path fill="#c9cbd1" d="M3 3h6v8H3zM4 1h4v1H4z" /></svg></button>
      </div>
      <div class="set s-search">
        <input type="text" placeholder="Search in model" aria-label="Search in model" />
        <button class="plain" aria-label="Search"><svg viewBox="0 0 12 12"><circle cx="5" cy="5" r="4" fill="none" stroke="#22242f" stroke-width="1.300" /><path stroke="#22242f" stroke-width="1.800" d="M8 8l3 3" /></svg></button>
        <button class="plain" aria-label="Search area"><svg viewBox="0 0 12 12"><path fill="none" stroke="#9a9ca6" d="M1 1h10v10H1z" /><circle cx="5.500" cy="5.500" r="2.500" fill="none" stroke="#33354a" /><path stroke="#33354a" d="M7 7l3 3" /></svg></button>
      </div>
      <div class="set s-snap">
        <button v-for="s in snaps" :key="s" class="plain key" :aria-label="s"><svg viewBox="0 0 12 12" v-html="mini[s]" /></button>
        <i class="bar" />
        <button class="plain key" aria-label="Profile"><svg viewBox="0 0 12 12" v-html="mini.k8" /></button>
        <button class="plain" aria-label="Show snaps"><svg viewBox="0 0 12 12" v-html="mini.eye" /></button>
      </div>
      <div class="set s-plane">
        <button aria-label="Geometry"><svg viewBox="0 0 12 12" v-html="mini.boxX" /></button>
        <button aria-label="Nearest"><svg viewBox="0 0 12 12" v-html="mini.tri" /></button>
        <button class="plain" aria-label="Any"><svg viewBox="0 0 12 12" v-html="mini.cross" /></button>
        <button class="plain" aria-label="Parallel"><svg viewBox="0 0 12 12" v-html="mini.slashes" /></button>
        <i class="bar" />
        <button class="plain" aria-label="Extension"><svg viewBox="0 0 12 12" v-html="mini.arrowUp" /></button>
        <i class="bar" />
        <button aria-label="Target"><svg viewBox="0 0 12 12" v-html="mini.target" /></button>
        <i class="bar" />
        <label class="drop"><select v-model="plane" aria-label="Plane"><option>View plane</option></select></label>
        <label class="drop"><select v-model="outlinePlane" aria-label="Plane type"><option>Outline planes</option></select></label>
        <button class="plain" aria-label="Show planes"><svg viewBox="0 0 12 12" v-html="mini.eye" /></button>
      </div>
    </div>

    <div class="status">
      <span class="prompt">Select the object to copy before starting the command.</span>
      <span>0</span><span class="pan">Pan</span><span class="phase">Current phase: 1, Phase 1</span><span class="count">1 objects and 0 handles selected</span>
    </div>

    <footer class="taskbar">
      <button class="start" aria-label="Start"><svg viewBox="0 0 12 12"><path fill="#fff" d="M0 2l5-1v4.500H0zM6 1l6-1v5.500H6zM0 6.500h5V11l-5-1zM6 6.500h6V12l-6-1z" /></svg></button>
      <label class="desk-search"><svg viewBox="0 0 12 12"><circle cx="7" cy="5" r="3.800" fill="none" stroke="#222" /><path stroke="#222" d="M4.500 8L1 11.500" /></svg><input type="text" placeholder="Type here to search" aria-label="Type here to search" />
        <svg class="stars" viewBox="0 0 42 20"><path fill="#fbc02d" d="M16 1l3 6 6 3-6 3-3 6-3-6-6-3 6-3zM32 8l1 3 3 1-3 1-1 3-1-3-3-1 3-1z" /><path fill="#1f9ae0" d="M2 13l2 1 2-1-1 2 1 2-2 0-2 1 0-2-1-2z" /><circle cx="28" cy="3" r="1.500" fill="#d1643f" /><circle cx="39" cy="16" r="1.500" fill="#79c36b" /></svg>
      </label>
      <div class="apps">
        <button v-for="a in taskApps" :key="a.name" :class="{ live: a.live }" :aria-label="a.name"><svg viewBox="0 0 16 16" v-html="a.art" /></button>
        <button class="live now"><svg viewBox="0 0 16 10"><path fill="#fff" d="M0 0h16v9H0z" /><path fill="#0a6bb5" d="M1 2h6l-1 3-2 0v2H2zM7 1h2L8 4z" /></svg><small>2024</small></button>
      </div>
      <div class="tray">
        <button class="weather"><svg viewBox="0 0 16 16"><circle cx="7" cy="8" r="6.500" fill="#f29a2e" /><path fill="#c5dcf5" d="M6 14q-1-4 3-4 3-3 5 0 3 1 1 4z" /><circle cx="12" cy="4" r="3.600" fill="#d6352b" /></svg><span>24°C</span><span>Mostly sunny</span></button>
        <button aria-label="Hidden icons"><svg viewBox="0 0 12 12"><path fill="none" stroke="#fff" d="M2 8l4-4 4 4" /></svg></button>
        <button aria-label="Meet now"><svg viewBox="0 0 12 12"><path fill="none" stroke="#fff" d="M2 4h6v5H2zM8 6l3-1v3L8 7M3 2h6M4 11h4" /></svg></button>
        <button aria-label="Microphone"><svg viewBox="0 0 12 12"><path fill="#fff" d="M4 0h4v7H4zM2 7h8v1H2zM5 8h2v4H5z" /></svg></button>
        <button aria-label="Battery"><svg viewBox="0 0 12 12"><path fill="none" stroke="#fff" d="M1 3.500h9v5H1z" /><path fill="#fff" d="M2 4h4v4H2zM10 5h2v2h-2z" /></svg></button>
        <button aria-label="Network"><svg viewBox="0 0 12 12"><path fill="none" stroke="#aeb7bb" d="M1 11Q1 2 11 1M4 11q0-6 7-7M7 11q0-3 4-4" /><circle cx="10" cy="10" r="1.300" fill="#fff" /></svg></button>
        <button aria-label="Volume"><svg viewBox="0 0 12 12"><path fill="none" stroke="#fff" d="M0 4.500h2l2-2v7l-2-2H0zM6 4q1 2 0 4M8 3q2 3 0 6M10 2q2 4 0 8" /></svg></button>
        <button aria-label="Pen"><svg viewBox="0 0 12 12"><path fill="none" stroke="#fff" d="M4 8l5-6 2 2-6 5zM4 8q-3-2-4 1t3 2l2-2M7 7q3 0 1 4" /></svg></button>
        <button class="lang">ENG</button>
        <button class="clock"><span>12:11</span><span>13-02-2026</span></button>
        <button class="note" aria-label="Notifications"><svg viewBox="0 0 12 12"><path fill="#fff" d="M0 1h12v9H6l-2 2v-2H0z" /><path stroke="#1f2d31" d="M2 3.500h8M2 5.500h8M2 7.500h5" /></svg></button>
      </div>
    </footer>
  </div>
</template>

<style>
body { margin: 0; }
</style>

<style scoped>
* { box-sizing: border-box; }
.app { height: 100vh; display: flex; flex-direction: column; font-family: Lato, "Open Sans", sans-serif; font-size: 8px; line-height: 12px; color: #2b2d38; background: #f1f1f5; overflow: hidden; }
button { font: inherit; color: inherit; background: none; border: 0; padding: 0; margin: 0; display: flex; align-items: center; justify-content: center; white-space: nowrap; }
input, select { font: inherit; color: inherit; border: 0; padding: 0; margin: 0; background: none; min-width: 0; outline: 0; }
select { appearance: none; }
svg { display: block; flex: none; }
h1, h2, ul { margin: 0; padding: 0; }

.titlebar { height: 20px; flex: none; background: #b3b6bf; display: flex; align-items: center; }
.brand { width: 21px; height: 20px; }
.quick, .account { display: flex; align-items: center; gap: 2px; }
.quick { flex: 494 1 0; padding-left: 4px; }
.quick svg, .account svg { width: 11px; height: 11px; }
.quick .after { margin-left: 14px; }
h1 { font-size: 8px; font-weight: 500; line-height: 20px; color: #22242f; white-space: nowrap; }
h1, .tabs, .clock { font-family: Roboto, "Open Sans", sans-serif; }
.account { flex: 553 1 0; justify-content: flex-end; gap: 9px; padding-right: 4px; }
.help { width: 11px; height: 11px; border-radius: 6px; background: #0a5596; color: #fff; font-weight: 700; }
.signin { gap: 5px; margin-left: 4px; }

.command { flex: none; height: 70px; display: flex; border-bottom: 1px solid #8d9199; }
.menu { width: 21px; background: #0064a8; flex: none; }
.menu svg { width: 8px; height: 8px; }
.ribbon-wrap { flex: 1; min-width: 0; display: flex; flex-direction: column; }
.tabs { height: 15px; display: flex; gap: 23px; padding-left: 48px; border-bottom: 1px solid #d2d3d9; position: relative; align-items: center; flex: none; }
.tabs::after { content: ""; position: absolute; left: 41px; bottom: -1px; width: 129px; height: 2px; background: #0064a8; }
.launch { margin-left: auto; width: 120px; height: 12px; background: #fff; display: flex; align-items: center; padding: 0 7px 0 5px; font-family: Lato, "Open Sans", sans-serif; }
.launch input { flex: 1; font-style: italic; }
.launch svg, .find svg { width: 8px; height: 8px; }
input::placeholder { color: #55575f; opacity: 1; }
.ribbon { flex: 1; display: flex; min-height: 0; }
.group { display: flex; border-right: 1px solid #cfd0d6; min-width: 0; overflow: hidden; }
.g0 { flex: 34 1 0; flex-direction: column; justify-content: space-around; align-items: center; padding: 2px 0; }
.g0 svg { width: 24px; height: 16px; }
.g1 { flex: 327 1 0; padding-left: 6px; }
.g2 { flex: 405 1 0; padding-left: 7px; }
.g3 { flex: 285 1 0; padding-left: 8px; }
.g4 { flex: 115 1 0; padding-left: 6px; }
.g5 { flex: 57 1 0; justify-content: center; border-right: 0; padding-left: 4px; }
.big { width: 40px; flex: none; flex-direction: column; justify-content: flex-start; padding-top: 11px; position: relative; }
.big svg { width: 22px; height: 22px; }
.big span { margin-top: 3px; line-height: 12px; }
.big:nth-child(5) { width: 52px; }
.g3 .big { width: 47px; }
.g4 .big { width: 54px; }
.big svg.lower { margin-top: 3px; margin-bottom: -3px; }
.tick { width: 0; height: 0; border: 2px solid transparent; border-top: 3px solid #22242f; border-bottom: 0; }
.stack { display: flex; flex-direction: column; flex: none; justify-content: space-around; align-items: flex-start; }
.stack button { gap: 4px; justify-content: flex-start; }
.three { width: 104px; }
.three .inset { padding-left: 4px; gap: 6px; }
.wide { width: 100%; }
.wide .tick { margin-left: auto; }
.cast { width: 77px; padding: 2px 0; margin-right: 6px; }
.pour { width: 101px; justify-content: flex-start; padding-top: 3px; }
.pour .low { margin-top: 4px; }
.two { width: 91px; padding: 1px 0; }
.off { color: #b4b5bb; }
.s10 { width: 10px; height: 10px; }
.s12 { width: 11px; height: 11px; }
.s14 { width: 14px; height: 10px; }
.s18 { width: 18px; height: 18px; }
.s22 { width: 20px; height: 20px; }

.work { flex: 1; min-height: 0; display: flex; position: relative; }
.desktop { flex: 1; min-width: 0; display: flex; flex-direction: column; background: #f1f1f3; border-right: 1px solid #c9cad0; }
.windows { flex: 1; min-height: 0; display: flex; background: #a3a3a3; padding-left: 9px; gap: 2px; }
.win { min-width: 0; display: flex; flex-direction: column; overflow: hidden; background: #d3e2ef; border-left: 1px solid #7f93a8; padding-left: 4px; }
.win.active { flex: 577 1 0; background: linear-gradient(#a9c6e6, #b9d7ef); padding-right: 7px; }
.plan2 { flex: 351 1 0; padding-right: 1px; }
.plan1 { flex: 279 1 0; margin-top: 6px; border-top: 1px solid #6a6f78; border-radius: 5px 0 0 0; }
.plan1 .caption { height: 20px; }
.caption { height: 18px; flex: none; display: flex; align-items: center; gap: 2px; white-space: nowrap; }
.win:not(.active) .caption { color: #8a96a3; }
.caption span { margin: 0 auto 0 4px; }
.app-mark { width: 8px; height: 7px; border: 1px solid #8ea3a5; background: linear-gradient(90deg, #4c8c78 50%, #fff 50%); margin-left: 1px; }
.caption button { width: 21px; height: 11px; border: 1px solid #7f98b6; border-radius: 2px; background: linear-gradient(#d7e5f4, #b3cbe5); }
.caption button svg { width: 19px; height: 9px; }
.plan2 .caption button, .plan1 .caption button { border-color: #a3b3c4; background: #cfdfee; }
.caption button.red { background: linear-gradient(#e0897b, #bf3a22); border-color: #8c3527; }
.canvas { flex: 1; min-height: 0; background: linear-gradient(#fff 0, #fff 25%, #eeedf3 45%, #cccad7 78%); overflow: hidden; }
.gold { border: 2px solid #ecc22f; border-bottom-width: 1px; }
.canvas svg { width: 100%; height: 100%; }
.green polygon { fill: #56802c; stroke: #22340f; stroke-width: 1; }
.green .mid { fill: #628d32; }
.teal polygon { fill: #31a189; stroke: #0f3b3a; stroke-width: 1; }
.teal .mid { fill: #3cae94; }
.violet { fill: #8b4499; stroke: #2b1030; }
.violet .edge { fill: none; }
.axis text { fill: #fff; font-size: 7px; font-weight: 700; text-anchor: middle; }
.tag { font-family: "Noto Sans", sans-serif; font-size: 10px; font-weight: 600; fill: #111; text-anchor: middle; }
.thin { font-weight: 500; }
.grid { stroke: #444; stroke-dasharray: 1 1; }
.vbar { width: 12px; flex: none; margin-left: -2px; background: #f0f0f0; display: flex; flex-direction: column; }
.vbar button { height: 14px; margin-bottom: 3px; }
.vbar button:last-child { height: 10px; margin-bottom: 2px; }
.vbar svg, .hbar svg { width: 8px; height: 8px; }
.vbar i { flex: 1; background: #cdcdcd; margin-bottom: 18px; }
.hbar { height: 14px; flex: none; display: flex; padding: 1px 11px 2px 0; }
.hbar button { width: 13px; }
.hbar i { flex: 1; background: #a6a6a6; margin-right: 34px; }
.sidebar { width: 24px; flex: none; background: #f1f1f5; }
.sidebar button { width: 100%; height: 19px; border-bottom: 1px solid #d0d1d7; }
.sidebar button:nth-child(1), .sidebar button:nth-child(2) { height: 22px; }
.sidebar button:last-child { border-right: 3px solid #0064a8; }
.sidebar svg { width: 12px; height: 12px; }

.panel { position: absolute; left: 15px; top: 29px; width: 199px; background: #fff; border: 1px solid #777b86; }
.panel header { height: 20px; display: flex; align-items: center; background: #f1f1f5; padding: 0 2px; gap: 5px; }
.panel header svg { width: 9px; height: 9px; }
h2 { font-size: 8px; font-weight: 700; flex: 1; white-space: nowrap; line-height: 12px; }
.modes { height: 23px; display: flex; align-items: flex-start; gap: 3px; padding: 1px 2px 0; background: #f1f1f5; }
.modes button { height: 18px; background: #b3b6bf; }
.modes svg { width: 11px; height: 11px; }
.w26 { width: 25px; }
.modes .w20 { width: 20px; margin-left: auto; }
.show { width: 63px; }
.find { height: 16px; display: flex; align-items: center; padding: 0 6px 0 3px; background: #fff; margin: 0 2px; border: 1px solid #e6e6ea; border-top: 0; }
.find input { flex: 1; font-style: italic; }
.panel ul { list-style: none; padding: 1px 0 22px 4px; }
.panel li { height: 14px; line-height: 14px; display: flex; align-items: center; color: #111; white-space: nowrap; }
.panel li.shade { background: #f7f7f9; margin-right: 4px; }
.panel li i { width: 4px; margin: 0 5px 0 4px; flex: none; }
.panel li .caret { border: 4px solid transparent; border-left: 4px solid #000; border-right: 0; }
.panel footer { height: 24px; background: #f1f1f5; display: flex; align-items: center; justify-content: space-between; padding: 0 4px; color: #111; }
.panel footer label { display: flex; align-items: center; gap: 3px; }
.panel footer input { appearance: none; width: 10px; height: 10px; background: #fff; border: 1px solid #dcdce2; }
.panel footer button { width: 24px; height: 18px; background: #b3b6bf; }
.panel footer svg { width: 10px; height: 10px; }

.floatbar { position: absolute; left: 249px; top: 540px; width: 433px; height: 19px; background: #f1f1f5; display: flex; align-items: center; padding: 0 3px; border: 1px solid #dcdde3; justify-content: space-between; }
.floatbar > div { display: flex; justify-content: space-between; }
.run18 { width: 262px; }
.run4 { width: 58px; }
.run2 { width: 30px; }
.floatbar button, .toolrow button { width: 13px; height: 14px; background: #bfc1c8; }
.floatbar button svg, .toolrow button svg { width: 10px; height: 10px; }
.floatbar .plain, .toolrow .plain { background: none; }
.drop { position: relative; background: #fff; height: 12px; display: flex; align-items: center; padding: 0 12px 0 3px; }
.drop::after { content: ""; position: absolute; right: 4px; top: 4px; border: 3px solid transparent; border-top: 4px solid #22242f; border-bottom: 0; }
.drop svg { width: 8px; height: 8px; margin-right: 1px; }

.toolrow { height: 22px; flex: none; display: flex; align-items: center; border-top: 1px solid #cfd0d6; padding: 0 0 1px 3px; }
.set { height: 18px; display: flex; align-items: center; border: 1px solid #dcdde3; border-right-color: #c6c7cd; }
.s-origin { width: 110px; padding: 0 4px; gap: 1px; }
.s-origin .drop { height: 14px; margin-right: auto; }
.toolrow .grey { background: #b9bbc2; }
.s-search { width: 137px; padding: 0 3px; gap: 4px; }
.s-search input { width: 98px; height: 14px; background: #fff; font-style: italic; padding-left: 2px; margin-right: 2px; }
.s-snap { width: 144px; justify-content: space-between; padding: 0 2px 0 5px; }
.toolrow .key svg { width: 9px; height: 9px; }
.s-plane { width: 250px; justify-content: space-between; padding: 0 2px 0 3px; }
.bar { width: 1px; height: 14px; background: #b7b8c0; }

.status { height: 16px; flex: none; background: #0064a8; color: #fff; display: flex; font-family: "Noto Sans", sans-serif; font-size: 10px; line-height: 16px; padding: 0 63px 0 2px; white-space: nowrap; }
.prompt { flex: 1; }
.pan { margin-left: 4px; }
.phase { margin-left: 15px; }
.count { margin-left: 28px; }

.taskbar { height: 27px; flex: none; background: #202d31; display: flex; color: #fff; }
.start { width: 32px; }
.start svg { width: 12px; height: 12px; }
.desk-search { width: 192px; background: #f3f3f3; display: flex; align-items: center; padding: 0 4px 0 7px; gap: 8px; }
.desk-search svg { width: 12px; height: 12px; }
.desk-search input { flex: 1; font-size: 10px; color: #222; }
.desk-search .stars { width: 42px; height: 20px; }
.apps { width: 425px; display: grid; grid-template-columns: repeat(13, 1fr); }
.apps button { flex-direction: column; }
.apps svg { width: 16px; height: 16px; }
.apps .live { border-bottom: 2px solid #f3d3b0; padding-top: 2px; }
.apps .now { background: #4a5459; }
.apps .now svg { height: 8px; }
.now small { width: 16px; height: 9px; background: #0a6bb5; font-size: 6px; line-height: 9px; font-weight: 700; }
.tray { margin-left: auto; display: flex; align-items: center; gap: 4px; padding-right: 16px; }
.tray svg { width: 12px; height: 12px; }
.weather { gap: 6px; font-size: 9px; margin-right: 11px; }
.weather svg { width: 15px; height: 15px; }
.lang { margin-left: 5px; }
.clock { flex-direction: column; line-height: 12px; margin: 0 7px 0 4px; }
</style>
